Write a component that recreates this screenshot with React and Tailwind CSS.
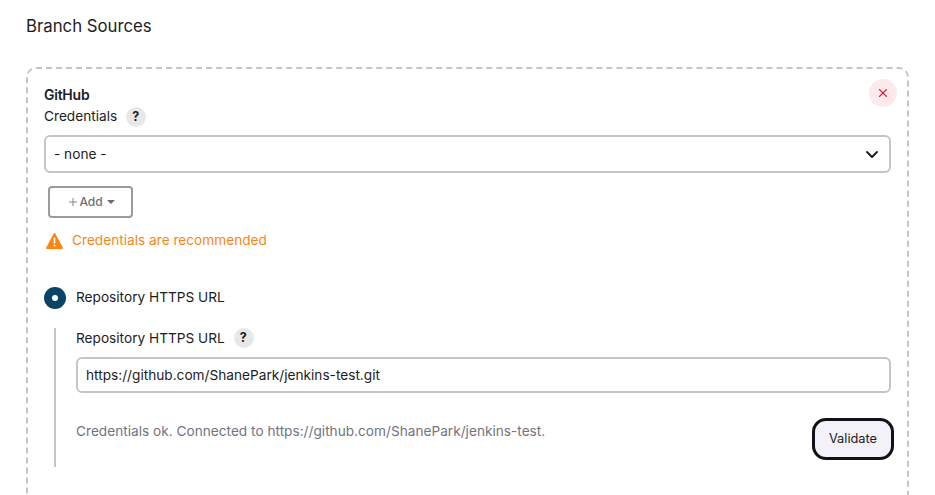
function Help() {
  return (
    <span className="ml-[9px] mt-px flex h-5 w-5 items-center justify-center rounded-full bg-[#e8e8e9] pr-px text-[12.5px] font-bold text-[#1c1c22]">
      ?
    </span>
  );
}

export default function App() {
  return (
    <main className="h-[495px] w-[935px] overflow-hidden bg-white pl-[26px] font-['Inter',sans-serif] text-[13.67px] leading-5 text-[#1c1c22]">
      <h1 className="h-[67px] pt-[14px] text-[16.75px] leading-6">Branch Sources</h1>
      <section className="h-[600px] w-[883px] rounded-[10px] border-2 border-dashed border-[#c3c5c7] pl-4">
        <div className="flex h-[37px] justify-between pr-[10px]">
          <h2 className="pt-4 text-[14px] font-semibold tracking-[-0.25px]">GitHub</h2>
          <button className="mt-[10px] flex h-7 w-7 items-center justify-center rounded-full bg-[#fdeaed]">
            <svg width="8" height="8" viewBox="0 0 8 8" stroke="#d4153a" strokeWidth="1.3" strokeLinecap="round"><path d="M.6.6l6.8 6.8M7.4.6L.6 7.4" /></svg>
          </button>
        </div>
        <div className="flex h-[29px] items-start">
          <span>Credentials</span>
          <Help />
        </div>
        <div className="flex h-[38px] w-[847px] items-center justify-between rounded-[6px] border-2 border-[#c3c5c7] pl-2 pr-[10px]">
          <span>- none -</span>
          <svg width="14" height="9" viewBox="0 0 14 9" fill="none" stroke="#1c1c22" strokeWidth="1.9" strokeLinecap="round" strokeLinejoin="round"><path d="M2 2l5 5 5-5" /></svg>
        </div>
        <button className="ml-1 mt-[13px] flex h-8 w-[85px] items-center justify-center rounded-[4px] border-2 border-[#999b9e] pl-[3px] text-[12px] font-medium tracking-[-0.1px] text-[#6b6d75]">
          <svg className="mr-[3px]" width="8" height="8" viewBox="0 0 8 8" stroke="#85878d" strokeWidth="1"><path d="M4 0v8M0 4h8" /></svg>
          <span>Add</span>
          <svg className="ml-[5px]" width="8" height="4" viewBox="0 0 8 4" fill="#6b6d75"><path d="M0 0h8L4 4z" /></svg>
        </button>
        <div className="mt-3 flex h-5 items-center text-[#f5871a]">
          <svg className="ml-[2px] mr-[9px] mt-[2px]" width="17" height="16" viewBox="0 0 17 16"><path d="M8.5 1L16 15H1z" fill="#ff8614" stroke="#ff8614" strokeWidth="1.8" strokeLinejoin="round" /><path d="M8.5 5.3v4.5" stroke="#fff" strokeWidth="1.6" strokeLinecap="round" /><circle cx="8.5" cy="12.5" r="1" fill="#fff" /></svg>
          <span>Credentials are recommended</span>
        </div>
        <div className="mt-9 flex h-[23px] items-center">
          <span className="mr-[10px] flex h-[22px] w-[22px] items-center justify-center rounded-full bg-[#0b4365]"><span className="h-[6px] w-[6px] rounded-full bg-white" /></span>
          <span className="mb-px">Repository HTTPS URL</span>
        </div>
        <div className="ml-[10px] mt-[19px] h-[139px] w-[840px] border-l-2 border-[#c3c5c7] pl-5">
          <div className="flex h-[29px] items-start">
            <span>Repository HTTPS URL</span>
            <span className="-mt-px"><Help /></span>
          </div>
          <div className="flex h-9 w-[815px] items-center rounded-[6px] border-2 border-[#c3c5c7] pl-2">
            <span>https://github.com/ShanePark/jenkins-test.git</span>
          </div>
          <div className="mt-[25px] flex justify-between">
            <span className="mt-[3px] text-[#73737f]">Credentials ok. Connected to https://github.com/ShanePark/jenkins-test.</span>
            <button className="h-[42px] w-[82px] rounded-[14px] border-[3px] border-[#11111a] bg-[#f3f2fa] pb-px text-[12.8px]">Validate</button>
          </div>
        </div>
      </section>
    </main>
  );
}
